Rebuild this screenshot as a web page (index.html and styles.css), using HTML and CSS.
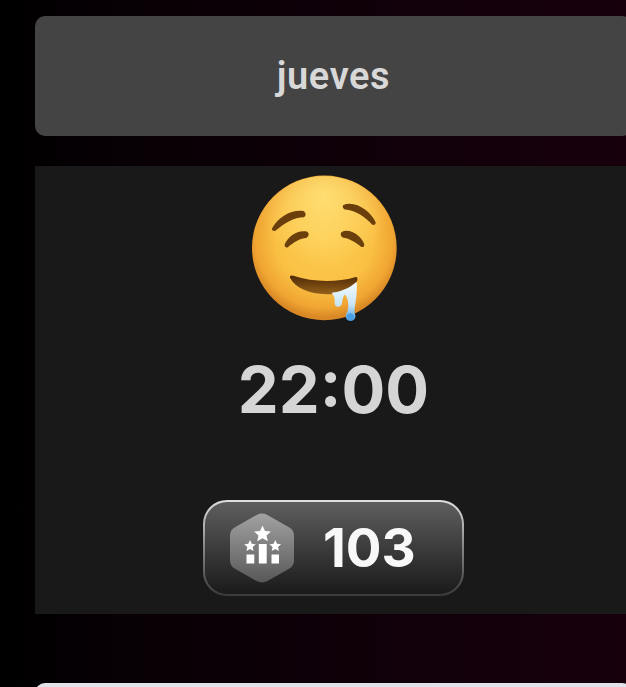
FILE: index.html
```html
<!DOCTYPE html>
<html lang="es">
<head>
<meta charset="utf-8">
<title>jueves</title>
<link rel="stylesheet" href="styles.css">
</head>
<body>
<main class="page">
  <header class="day"><span class="day-label">jueves</span></header>
  <section class="slot">
    <svg class="emoji" viewBox="66 30 435 440" aria-hidden="true">
      <defs>
        <radialGradient id="face" cx="50%" cy="44%" r="54%">
          <stop offset="0" stop-color="#fdcd50"/>
          <stop offset="0.62" stop-color="#fac044"/>
          <stop offset="0.88" stop-color="#f0a532"/>
          <stop offset="1" stop-color="#d98825"/>
        </radialGradient>
        <radialGradient id="shine" cx="50%" cy="14%" r="48%">
          <stop offset="0" stop-color="#ffe27a" stop-opacity="0.85"/>
          <stop offset="1" stop-color="#ffe27a" stop-opacity="0"/>
        </radialGradient>
        <linearGradient id="mouth" x1="0" y1="0" x2="0" y2="1">
          <stop offset="0" stop-color="#4f2a06"/>
          <stop offset="1" stop-color="#94601a"/>
        </linearGradient>
        <linearGradient id="drool" x1="0" y1="0" x2="0" y2="1">
          <stop offset="0" stop-color="#f6fcff"/>
          <stop offset="0.6" stop-color="#c6e4f6"/>
          <stop offset="1" stop-color="#4a9fe2"/>
        </linearGradient>
      </defs>
      <circle cx="283" cy="248" r="217" fill="url(#face)"/>
      <circle cx="283" cy="248" r="215" fill="url(#shine)"/>
      <g fill="#6a3f0c">
        <path d="M126 190C145 155 185 132 222 138Q232 148 222 156C192 156 162 174 136 197Q125 199 126 190Z"/>
        <path d="M164 238C175 212 205 193 232 200Q241 210 230 218C210 220 190 232 173 247Q163 248 164 238Z"/>
        <path d="M339 120C375 104 422 138 437 171Q437 181 427 179C405 153 375 136 345 133Q336 129 339 120Z"/>
        <path d="M334 201C360 187 394 213 403 237Q403 248 393 245C378 231 355 219 338 217Q329 210 334 201Z"/>
      </g>
      <path fill="url(#mouth)" d="M180 338Q178 329 190 332C250 352 320 352 375 336Q384 334 382 345C375 367 350 387 290 387C235 387 195 367 180 338Z"/>
      <path fill="url(#drool)" d="M305 383C330 380 355 372 380 350C383 400 372 420 374 445C380 455 374 468 360 467C346 466 344 452 352 440C358 420 354 398 345 388C338 394 337 410 335 418C328 430 313 426 314 412C315 400 312 392 305 383Z"/>
      <circle cx="361" cy="455" r="11" fill="#4a9fe2"/>
    </svg>
    <div class="time">22:00</div>
    <div class="score">
      <svg class="score-icon" viewBox="0 0 64 70" aria-hidden="true">
        <defs>
          <linearGradient id="hex" x1="0" y1="0" x2="0" y2="1">
            <stop offset="0" stop-color="#a2a2a2"/>
            <stop offset="1" stop-color="#585858"/>
          </linearGradient>
        </defs>
        <path fill="url(#hex)" d="M27 1.700Q32 -.6 37 1.700L59 14.200Q64 17 64 22.500V47.500Q64 53 59 55.800L37 68.300Q32 70.600 27 68.300L5 55.800Q0 53 0 47.500V22.500Q0 17 5 14.200Z"/>
        <g fill="#fff">
          <path d="M32.500 12.500l2.500 5.400 5.900.6-4.400 3.900 1.300 5.800-5.300-3-5.300 3 1.300-5.800-4.400-3.900 5.900-.6z"/>
          <path d="M20 27l1.700 3.800 4.100.4-3.100 2.800.9 4.100-3.600-2.100-3.600 2.100.9-4.100-3.100-2.800 4.100-.4z"/>
          <path d="M45.300 27l1.700 3.800 4.100.4-3.100 2.800.9 4.100-3.600-2.100-3.600 2.100.9-4.100-3.100-2.800 4.100-.4z"/>
          <rect x="16.500" y="41.500" width="7.800" height="9"/>
          <rect x="28.800" y="31" width="7.900" height="19.500"/>
          <rect x="41.500" y="41.500" width="7.500" height="9"/>
        </g>
      </svg>
      <span class="score-value">103</span>
    </div>
  </section>
  <div class="next-card"></div>
</main>
</body>
</html>
```
FILE: styles.css
```css
* { box-sizing: border-box; }
html, body { margin: 0; padding: 0; }
body { background: #000; }
.page {
  width: 626px;
  height: 687px;
  overflow: hidden;
  padding: 16px 0 0 35px;
  background: linear-gradient(90deg, #000 0, #060004 15%, #0e0008 50%, #17000c 100%);
  font-family: Inter, "Liberation Sans", sans-serif;
}
.day {
  width: 597px;
  height: 120px;
  border-radius: 10px;
  background: #444;
  display: flex;
  align-items: center;
  justify-content: center;
}
.day-label {
  font-family: Roboto, "Liberation Sans", sans-serif;
  font-size: 38px;
  font-weight: 600;
  letter-spacing: 0.6px;
  color: #d8d8d8;
}
.slot {
  width: 597px;
  height: 448px;
  margin-top: 30px;
  padding-top: 9px;
  background: #191919;
  display: flex;
  flex-direction: column;
  align-items: center;
}
.emoji {
  width: 145px;
  height: 147px;
  margin-right: 18px;
  flex: none;
}
.time {
  margin-top: 28px;
  font-size: 65px;
  line-height: 80px;
  font-weight: 700;
  color: #d5d5d5;
}
.score {
  width: 261px;
  height: 96px;
  margin-top: 70px;
  padding-left: 25px;
  display: flex;
  align-items: center;
  gap: 29px;
  border: 2px solid transparent;
  border-radius: 24px;
  background:
    linear-gradient(180deg, #5e5e5e 0, #1a1a1a 100%) padding-box,
    linear-gradient(180deg, #e0e0e0 0, #8d8d8d 45%, #3a3a3a 100%) border-box;
}
.score-icon {
  width: 64px;
  height: 70px;
  flex: none;
}
.score-value {
  font-size: 53px;
  line-height: 60px;
  font-weight: 700;
  color: #f8f8f8;
}
.next-card {
  width: 597px;
  height: 40px;
  margin-top: 69px;
  border-radius: 10px;
  background: #e0e3ea;
}
```
